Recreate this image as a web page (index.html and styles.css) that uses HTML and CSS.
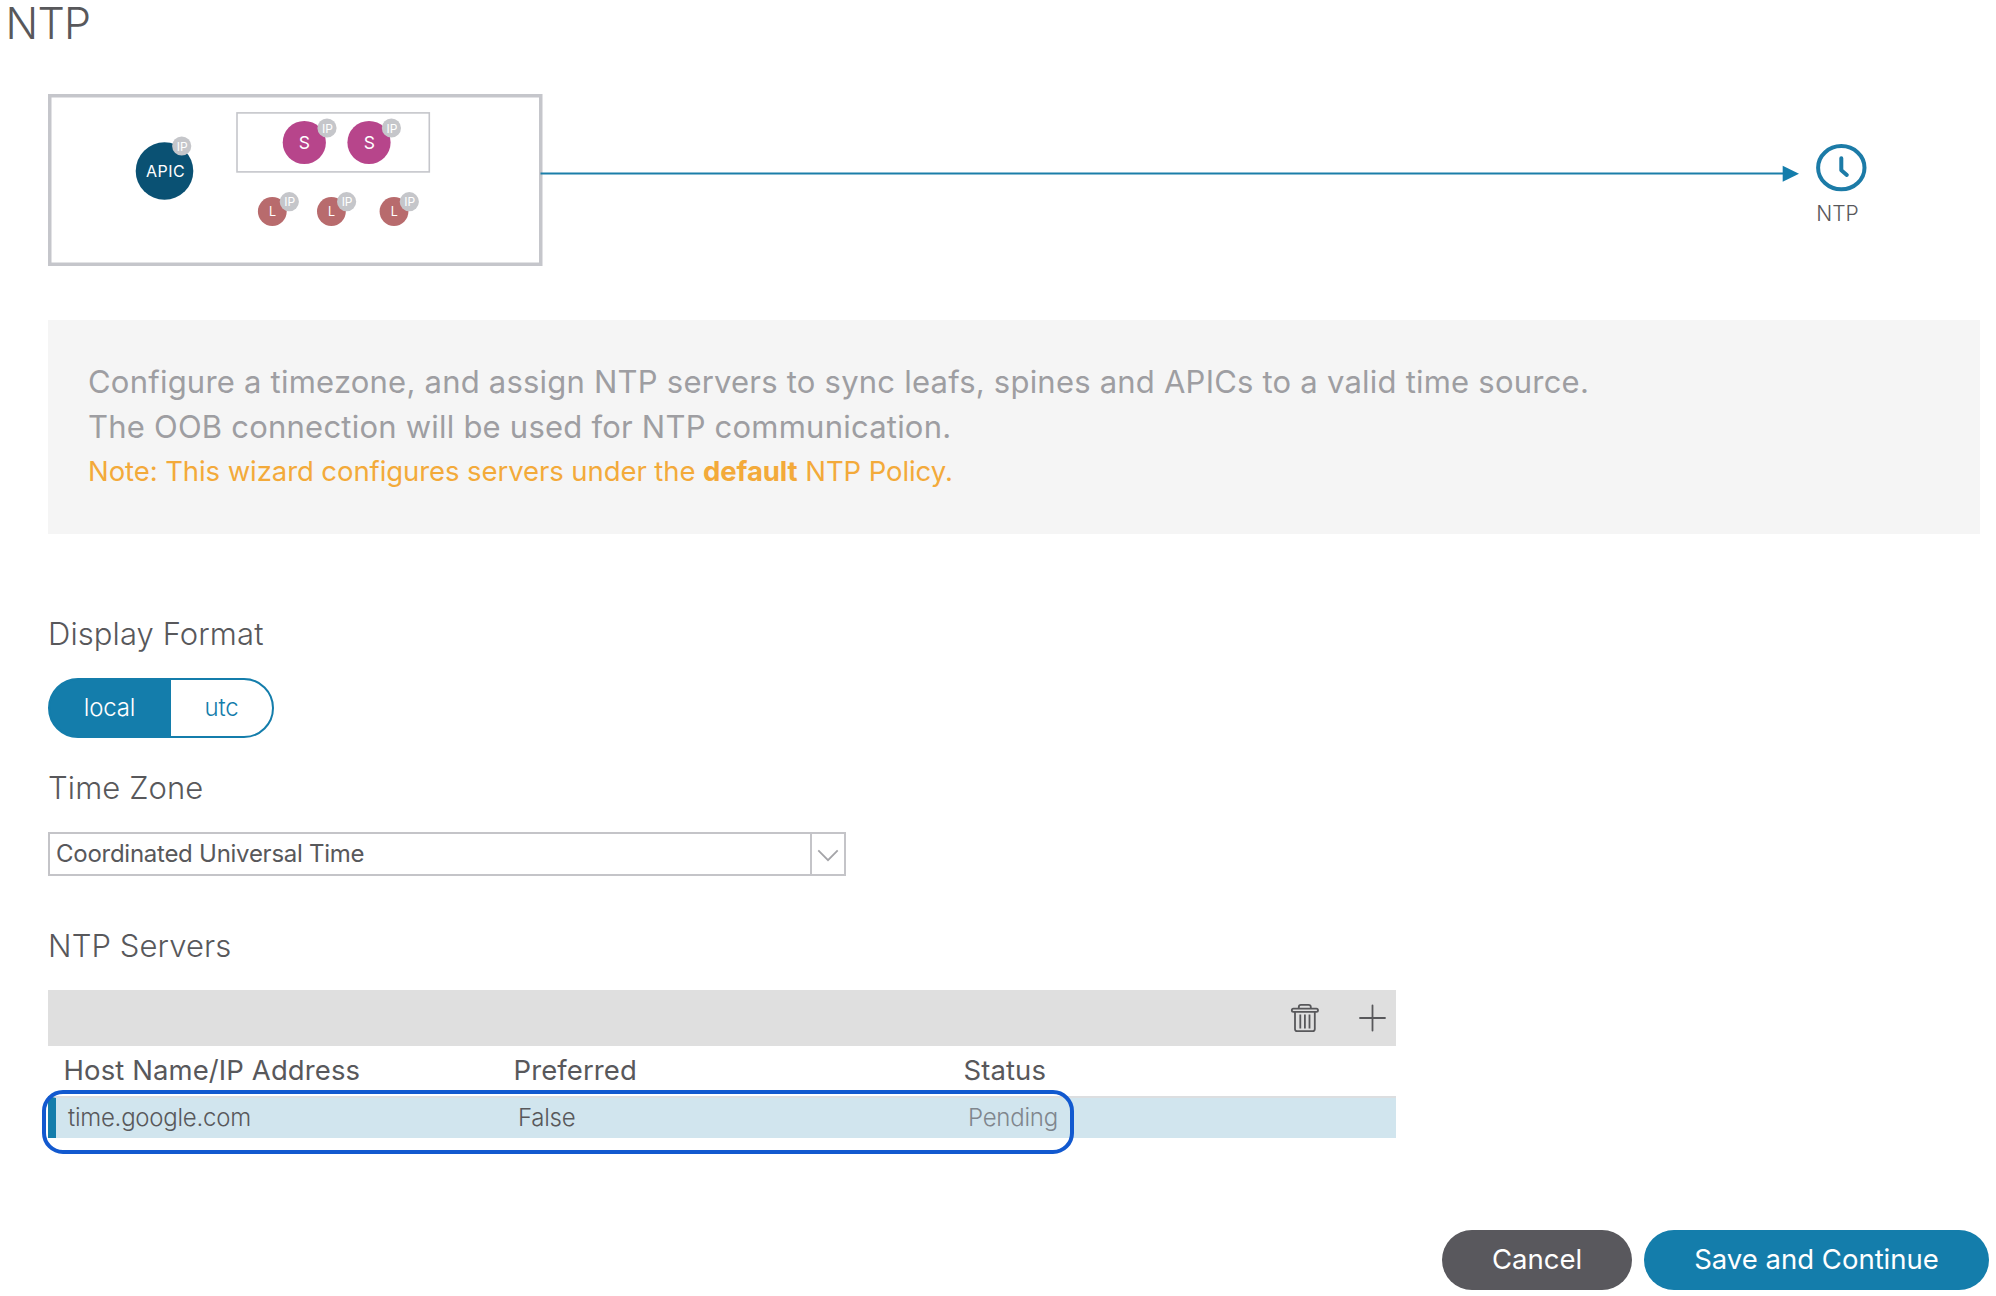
FILE: index.html
```html
<!DOCTYPE html>
<html lang="en">
<head>
<meta charset="utf-8">
<title>NTP</title>
<link rel="stylesheet" href="styles.css">
</head>
<body>
<main class="page">
  <h1 class="title"><span>NTP</span></h1>

  <svg class="topology" width="1996" height="200" viewBox="0 80 1996 200">
    <rect class="fabric" x="49.75" y="95.75" width="491" height="168.5"/>
    <rect class="spines" x="237" y="112.9" width="192.3" height="59"/>
    <circle class="apic" cx="164.5" cy="171" r="28.8"/>
    <text class="apic-text" x="165.5" y="177">APIC</text>
    <circle class="spine" cx="304.3" cy="142.5" r="21.6"/>
    <text class="spine-text" x="304.3" y="149">S</text>
    <circle class="spine" cx="369" cy="142.5" r="21.6"/>
    <text class="spine-text" x="369.3" y="149">S</text>
    <circle class="leaf" cx="272.3" cy="211.5" r="14.4"/>
    <text class="leaf-text" x="272.5" y="216">L</text>
    <circle class="leaf" cx="331.4" cy="211.5" r="14.4"/>
    <text class="leaf-text" x="331.6" y="216">L</text>
    <circle class="leaf" cx="394" cy="211.5" r="14.4"/>
    <text class="leaf-text" x="394.3" y="216">L</text>
    <g class="badges">
      <circle cx="181.7" cy="146" r="9.6"/><text x="182.2" y="150.6">IP</text>
      <circle cx="327" cy="128" r="9.6"/><text x="327.5" y="132.6">IP</text>
      <circle cx="391.4" cy="128" r="9.6"/><text x="391.9" y="132.6">IP</text>
      <circle cx="289.3" cy="201.7" r="9.6"/><text x="289.8" y="206.3">IP</text>
      <circle cx="346.6" cy="201.7" r="9.6"/><text x="347.1" y="206.3">IP</text>
      <circle cx="409.3" cy="201.7" r="9.6"/><text x="409.8" y="206.3">IP</text>
    </g>
    <path class="link" d="M540.5 173.6H1784"/>
    <path class="arrow" d="M1782.7 165.7L1799 173.7L1782.7 181.8Z"/>
    <ellipse class="clock" cx="1841.3" cy="167.7" rx="23.2" ry="21.6"/>
    <path class="clock" d="M1841.3 158.3V170.3L1846.8 175"/>
    <text class="clock-text" x="1816.3" y="221">NTP</text>
  </svg>

  <section class="info">
    <p class="lead"><span>Configure a timezone, and assign NTP servers to sync leafs, spines and APICs to a valid time source.</span></p>
    <p class="lead"><span>The OOB connection will be used for NTP communication.</span></p>
    <p class="note"><span>Note: This wizard configures servers under the <b>default</b> NTP Policy.</span></p>
  </section>

  <section class="form">
    <h2 class="label format"><span>Display Format</span></h2>
    <div class="toggle">
      <div class="option selected"><span>local</span></div>
      <div class="option"><span>utc</span></div>
    </div>
    <h2 class="label zone"><span>Time Zone</span></h2>
    <div class="select">
      <div class="value"><span>Coordinated Universal Time</span></div>
      <div class="drop"><svg width="32" height="40" viewBox="0 0 32 40"><path d="M6.3 16.3L16 26.2L25.7 16.3"/></svg></div>
    </div>
    <h2 class="label servers"><span>NTP Servers</span></h2>
    <div class="grid">
      <div class="toolbar">
        <svg class="tool trash" width="30" height="30" viewBox="0 0 30 30">
          <rect x="1.8" y="5.6" width="26.2" height="3.2" rx="1.6"/>
          <path d="M8.8 5.4V4Q8.8 1.8 11 1.8H18.4Q20.8 1.8 20.8 4V5.4M5 9V26Q5 28.2 7.2 28.2H22.6Q24.8 28.2 24.8 26V9M10.3 11.6V25.4M14.9 11.6V25.4M19.5 11.6V25.4"/>
        </svg>
        <svg class="tool plus" width="28" height="28" viewBox="0 0 28 28"><path d="M2 14H27M14.5 1.5V26.5"/></svg>
      </div>
      <div class="row head"><div><span>Host Name/IP Address</span></div><div><span>Preferred</span></div><div><span>Status</span></div></div>
      <div class="row item"><div><span>time.google.com</span></div><div><span>False</span></div><div class="pending"><span>Pending</span></div><i class="highlight"></i></div>
    </div>
  </section>

  <footer class="actions">
    <button class="btn cancel"><span>Cancel</span></button>
    <button class="btn save"><span>Save and Continue</span></button>
  </footer>
</main>
</body>
</html>
```
FILE: styles.css
```css
* { box-sizing: border-box; }
body { margin: 0; background: #fff; color: #58585b; font-family: Inter, "Liberation Sans", sans-serif; }
h1, h2, p { margin: 0; font-weight: 300; }
.page { height: 1296px; display: flex; flex-direction: column; }
.title { height: 80px; padding-left: 5.5px; font-size: 43px; line-height: 47px; letter-spacing: -0.7px; }

.topology { display: block; flex: none; }
.topology text { fill: #fff; text-anchor: middle; }
.fabric { fill: none; stroke: #c5c6cb; stroke-width: 3.5; }
.spines { fill: none; stroke: #c5c6cb; stroke-width: 1.6; }
.apic { fill: #0a5173; }
.spine { fill: #b7458b; }
.leaf { fill: #b86b6d; }
.topology .apic-text { font-size: 16px; letter-spacing: 0.5px; }
.topology .spine-text { font-size: 17.5px; }
.topology .leaf-text { font-size: 12.5px; }
.badges circle { fill: #c5c6ca; }
.badges text { font-size: 12px; }
.link { stroke: #1b7ea9; stroke-width: 2; }
.arrow { fill: #147dab; }
.clock { fill: none; stroke: #1c7ba7; stroke-width: 4; stroke-linecap: round; stroke-linejoin: round; }
.topology .clock-text { fill: #58585b; font-size: 21px; font-weight: 300; text-anchor: start; }

.info { width: 1932px; height: 214px; margin: 40px 0 0 48px; padding: 39px 0 0 40px; background: #f5f5f5; flex: none; }
.lead { height: 45px; font-size: 31px; line-height: 45px; letter-spacing: 0.22px; color: #9e9ea2; font-weight: 400; }
.note { height: 44px; font-size: 27.5px; line-height: 44px; letter-spacing: -0.08px; color: #f3aa3a; font-weight: 400; }
.note b { font-weight: 700; }

.form { display: flex; flex-direction: column; padding-left: 48px; }
.label { height: 40px; font-size: 31px; line-height: 40px; letter-spacing: 0.1px; }
.format { margin-top: 80px; }
.toggle { display: flex; width: 226px; height: 60px; margin-top: 24px; border: 2px solid #147dab; border-radius: 30px; overflow: hidden; background: linear-gradient(90deg, #147dab 60px, #fff 60px) border-box; font-size: 24px; line-height: 56px; font-weight: 300; letter-spacing: -0.2px; color: #147dab; }
.option { flex: 1; text-align: center; }
.option.selected { flex: none; width: 121px; padding-right: 2px; background: #147dab; color: #fff; }
.zone { margin-top: 30px; }
.select { display: flex; width: 798px; height: 44px; margin-top: 24px; border: 2px solid #c4c4c8; font-size: 24px; line-height: 40px; letter-spacing: -0.26px; }
.value { flex: 1; padding-left: 6px; }
.drop { width: 34px; border-left: 2px solid #c4c4c8; }
.drop svg { display: block; fill: none; stroke: #a4a4a8; stroke-width: 1.8; }
.servers { margin-top: 50px; }
.grid { width: 1348px; margin-top: 24px; }
.toolbar { display: flex; align-items: center; justify-content: flex-end; height: 56px; background: #dfdfdf; padding-right: 10px; }
.tool { fill: none; stroke: #58585b; stroke-width: 1.8; }
.plus { margin-left: 38px; stroke-linecap: round; }
.row { display: grid; grid-template-columns: 450px 450px 1fr; padding-left: 15.5px; }
.head { height: 50px; font-size: 27.5px; line-height: 48px; letter-spacing: 0.1px; }
.item { position: relative; height: 42px; padding-left: 12px; border-left: 8px solid #147dab; border-top: 2px solid #dcdee0; background: #d1e5ee; font-size: 24px; line-height: 40px; font-weight: 300; letter-spacing: -0.25px; }
.pending { color: #7f868d; }
.highlight { position: absolute; left: -14px; top: -8px; width: 1032px; height: 64px; border: 4px solid #1259cf; border-radius: 21px; }

.actions { display: flex; gap: 12px; margin-top: 92px; padding-left: 1442px; }
.btn { height: 60px; border: 0; border-radius: 30px; padding: 0 0 2px; color: #fff; font: 400 27.5px/58px Inter, "Liberation Sans", sans-serif; }
.cancel { width: 190px; background: #59585d; }
.save { width: 345px; background: #147dab; }
```
